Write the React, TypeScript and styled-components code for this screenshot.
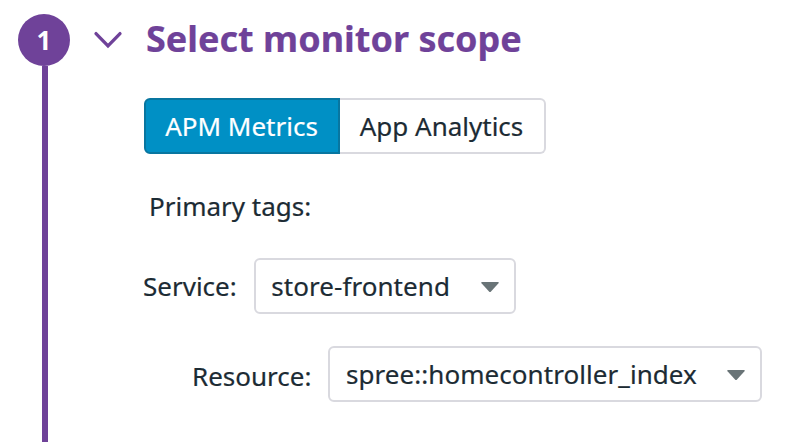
import React from "react";
import styled, { createGlobalStyle } from "styled-components";

const GlobalStyle = createGlobalStyle`
  body { margin: 0; background: #fff; }
  * { box-sizing: border-box; }
`;

const Page = styled.main`
  display: flex;
  width: 800px;
  height: 442px;
  overflow: hidden;
  background: #fff;
  color: #1c2b34;
  font: 26px/36px "Noto Sans", sans-serif;
  -webkit-text-stroke: 0.2px currentColor;
  white-space: nowrap;
`;

const StepRail = styled.div`
  display: flex;
  flex-direction: column;
  align-items: center;
  width: 52px;
  margin: 14px 0 0 18px;
`;

const StepNumber = styled.div`
  display: flex;
  flex: none;
  align-items: center;
  justify-content: center;
  width: 52px;
  height: 52px;
  border-radius: 50%;
  background: #6f4299;
  color: #fff;
  font-size: 26px;
  font-weight: 700;
  -webkit-text-stroke: 0;
`;

const StepLine = styled.div`
  flex: 1;
  width: 6px;
  margin-left: 2px;
  background: #6f4299;
`;

const Content = styled.section`
  display: flex;
  flex-direction: column;
  align-items: flex-start;
  padding-left: 23px;
`;

const Header = styled.header`
  display: flex;
  align-items: center;
  height: 80px;
  gap: 23px;
`;

const Title = styled.h1`
  margin: 0;
  padding-bottom: 2px;
  color: #6f4299;
  font-size: 36px;
  line-height: 48px;
  font-weight: 700;
`;

const Tabs = styled.div`
  display: flex;
  margin: 18px 0 0 51px;
`;

const Tab = styled.button<{ $active?: boolean }>`
  width: ${(p) => (p.$active ? 196 : 206)}px;
  height: 56px;
  padding: 0 1px 0 0;
  border: 2px solid ${(p) => (p.$active ? "#0876a0" : "#d9d9df")};
  border-left-width: ${(p) => (p.$active ? 2 : 0)}px;
  border-radius: ${(p) => (p.$active ? "6px 0 0 6px" : "0 6px 6px 0")};
  background: ${(p) => (p.$active ? "#0090c5" : "#fff")};
  color: ${(p) => (p.$active ? "#fff" : "inherit")};
  font: inherit;
  -webkit-text-stroke: inherit;
`;

const TagsLabel = styled.div`
  margin: 34px 0 0 56px;
`;

const Field = styled.div<{ $indent: number; $top: number }>`
  display: flex;
  align-items: center;
  gap: 17px;
  margin: ${(p) => p.$top}px 0 0 ${(p) => p.$indent}px;
`;

const FieldLabel = styled.span<{ $drop?: number }>`
  padding-top: ${(p) => p.$drop ?? 0}px;
`;

const Select = styled.button<{ $width: number }>`
  display: flex;
  align-items: center;
  justify-content: space-between;
  width: ${(p) => p.$width}px;
  height: 56px;
  padding: 0 15px 0 15.5px;
  border: 2px solid #d9d9df;
  border-radius: 6px;
  background: #fff;
  color: inherit;
  font: inherit;
  letter-spacing: 0.06px;
  -webkit-text-stroke: inherit;
`;

const CaretIcon = styled.svg`
  margin-top: 2px;
`;

const Caret = () => (
  <CaretIcon width="18" height="10" viewBox="0 0 18 10">
    <path d="M1 0h16q1.5 0 .5 1.2L10 9.4q-1 1-2 0L.5 1.2Q-.5 0 1 0Z" fill="#697477" />
  </CaretIcon>
);

export default function App() {
  return (
    <>
      <GlobalStyle />
      <Page>
        <StepRail>
          <StepNumber>1</StepNumber>
          <StepLine />
        </StepRail>
        <Content>
          <Header>
            <svg
              width="30"
              height="20"
              viewBox="0 0 30 20"
              fill="none"
              stroke="#6f4299"
              strokeWidth="3.3"
              strokeLinecap="round"
            >
              <path d="M3 3.6L15 15.8L27 3.6" />
            </svg>
            <Title>Select monitor scope</Title>
          </Header>
          <Tabs>
            <Tab $active>APM Metrics</Tab>
            <Tab>App Analytics</Tab>
          </Tabs>
          <TagsLabel>Primary tags:</TagsLabel>
          <Field $indent={50} $top={34}>
            <FieldLabel>Service:</FieldLabel>
            <Select $width={262}>store-frontend<Caret /></Select>
          </Field>
          <Field $indent={99} $top={32}>
            <FieldLabel $drop={4}>Resource:</FieldLabel>
            <Select $width={434}>spree::homecontroller_index<Caret /></Select>
          </Field>
        </Content>
      </Page>
    </>
  );
}
